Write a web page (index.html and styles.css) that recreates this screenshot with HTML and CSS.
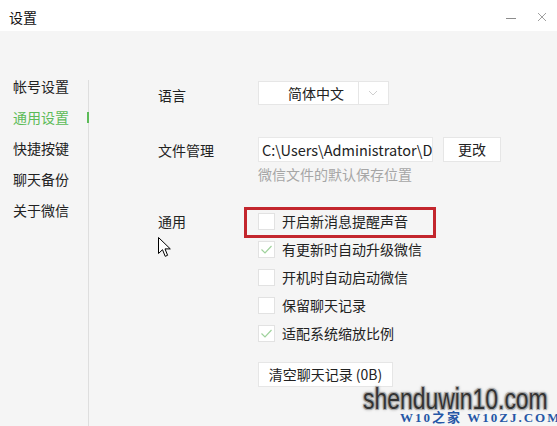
FILE: index.html
```html
<!DOCTYPE html>
<html lang="zh-CN">
<head>
<meta charset="utf-8">
<title>设置</title>
<link rel="stylesheet" href="styles.css">
</head>
<body>
<div class="window">
  <header class="titlebar">
    <span class="title">设置</span>
    <div class="controls">
      <svg class="ctl ctl-min" width="10" height="10" viewBox="0 0 10 10"><line x1="0" y1="6.5" x2="10" y2="6.5" stroke="#8c8c8c" stroke-width="1"/></svg>
      <svg class="ctl ctl-close" width="10" height="10" viewBox="0 0 10 10"><path d="M1 1L9 9M9 1L1 9" stroke="#a0a0a0" stroke-width="1" fill="none"/></svg>
    </div>
  </header>
  <div class="body">
    <nav class="sidebar">
      <ul class="nav">
        <li class="nav-item">帐号设置</li>
        <li class="nav-item active">通用设置</li>
        <li class="nav-item">快捷按键</li>
        <li class="nav-item">聊天备份</li>
        <li class="nav-item">关于微信</li>
      </ul>
      <div class="divider"></div>
    </nav>
    <main class="content">
      <section class="row row-lang">
        <div class="label label-lang">语言</div>
        <div class="select">
          <span class="select-value">简体中文</span>
          <span class="select-arrow"><svg width="10" height="6" viewBox="0 0 10 6"><path d="M1 1L5 5L9 1" stroke="#cfcfcf" stroke-width="1" fill="none"/></svg></span>
        </div>
      </section>
      <section class="row row-file">
        <div class="label label-file">文件管理</div>
        <div class="field-col">
          <div class="field-line">
            <div class="path-input">C:\Users\Administrator\D</div>
            <button class="btn btn-change">更改</button>
          </div>
          <div class="hint">微信文件的默认保存位置</div>
        </div>
      </section>
      <section class="row row-general">
        <div class="label label-general">通用</div>
        <div class="field-col">
          <ul class="checks">
            <li class="check-row"><span class="box"></span>开启新消息提醒声音<span class="mark-box"></span></li>
            <li class="check-row"><span class="box"><svg width="15" height="15" viewBox="0 0 15 15"><path d="M2.5 7.5L6 11L12.5 4" stroke="#9fd29c" stroke-width="1.2" fill="none"/></svg></span>有更新时自动升级微信</li>
            <li class="check-row"><span class="box"></span>开机时自动启动微信</li>
            <li class="check-row"><span class="box"></span>保留聊天记录</li>
            <li class="check-row"><span class="box"><svg width="15" height="15" viewBox="0 0 15 15"><path d="M2.5 7.5L6 11L12.5 4" stroke="#9fd29c" stroke-width="1.2" fill="none"/></svg></span>适配系统缩放比例</li>
          </ul>
          <button class="btn btn-clear">清空聊天记录 (0B)</button>
        </div>
      </section>
    </main>
  </div>
  <svg class="cursor" width="13" height="21" viewBox="0 0 13 21"><path d="M0.5 0.5V16.5L4.5 12.7L7.2 19.3L9.6 18.3L7 11.9H12.3Z" fill="#fff" stroke="#000" stroke-width="1" stroke-linejoin="miter"/></svg>
  <div class="watermark">
    <div class="wm-main">shenduwin10.com</div>
    <div class="wm-sub">W10之家 W10ZJ.COM</div>
  </div>
</div>
</body>
</html>
```

FILE: styles.css
```css
* { box-sizing: border-box; }
html, body { margin: 0; padding: 0; }
body {
  font-family: "Noto Sans CJK SC", "Noto Sans", sans-serif;
  font-size: 14px;
  color: #222;
  background: #f5f5f5;
}
.window {
  position: relative;
  width: 557px;
  height: 426px;
  overflow: hidden;
  background: #f5f5f5;
}
.titlebar {
  height: 31px;
  background: #fff;
  display: flex;
  align-items: center;
  justify-content: space-between;
  padding-left: 9px;
}
.title {
  font-size: 14px;
  line-height: 20px;
  color: #111;
  margin-top: 2px;
}
.controls {
  display: flex;
  align-items: flex-start;
  height: 31px;
  padding-top: 12px;
  padding-right: 10px;
  gap: 21px;
}
.ctl { display: block; }
.body {
  display: flex;
  height: 395px;
}
.sidebar {
  display: flex;
  width: 89px;
  flex: none;
}
.nav {
  list-style: none;
  margin: 0;
  padding: 40px 0 0 0;
  width: 88px;
}
.nav-item {
  position: relative;
  height: 31px;
  line-height: 31px;
  padding-left: 13px;
  font-size: 14px;
  color: #222;
}
.nav-item.active { color: #5cbb58; }
.nav-item.active::after {
  content: "";
  position: absolute;
  right: -1px;
  top: 10px;
  width: 2px;
  height: 11px;
  background: #5cbb58;
}
.divider {
  width: 1px;
  margin-top: 49px;
  background: #dedede;
}
.content {
  flex: 1;
  padding: 50px 0 0 69px;
}
.row {
  display: flex;
  align-items: flex-start;
}
.label {
  width: 100px;
  flex: none;
  line-height: 20px;
}
.label-lang { padding-top: 4px; }
.select {
  display: flex;
  width: 131px;
  height: 24px;
  background: #fff;
  border: 1px solid #e6e6e6;
}
.select-value {
  width: 100px;
  line-height: 22px;
  text-align: center;
  padding-left: 15px;
  border-right: 1px solid #e6e6e6;
}
.select-arrow {
  flex: 1;
  display: flex;
  align-items: center;
  justify-content: center;
  padding-right: 1px;
}
.select-arrow svg { display: block; }
.row-file { margin-top: 32px; }
.label-file { padding-top: 3px; }
.field-col {
  display: flex;
  flex-direction: column;
  align-items: flex-start;
}
.field-line {
  display: flex;
  gap: 10px;
}
.path-input {
  width: 175px;
  height: 25px;
  line-height: 23px;
  background: #fff;
  border: 1px solid #e8e8e8;
  padding-left: 3px;
  white-space: nowrap;
  overflow: hidden;
  font-size: 14.5px;
  color: #222;
}
.btn {
  font-family: inherit;
  font-size: 14px;
  color: #222;
  background: #fff;
  border: 1px solid #e6e6e6;
  height: 25px;
  padding: 0;
  line-height: 23px;
  margin: 0;
}
.btn-change { width: 58px; }
.hint {
  margin-top: 2px;
  line-height: 20px;
  color: #a6a6a6;
}
.row-general { margin-top: 23px; }
.label-general { padding-top: 4px; }
.checks {
  list-style: none;
  margin: 0;
  padding: 0;
}
.check-row {
  position: relative;
  display: flex;
  align-items: center;
  gap: 7px;
  height: 28px;
  line-height: 20px;
}
.box {
  width: 17px;
  height: 17px;
  flex: none;
  background: #fff;
  border: 1px solid #e2e2e2;
  display: flex;
  align-items: center;
  justify-content: center;
}
.box svg { display: block; }
.mark-box {
  position: absolute;
  left: -14px;
  top: 0;
  width: 192px;
  height: 31px;
  border: 3px solid #c3262d;
}
.btn-clear {
  width: 135px;
  margin-top: 15px;
}
.cursor {
  position: absolute;
  left: 158px;
  top: 237px;
}
.watermark {
  position: absolute;
  left: 363px;
  top: 385px;
  width: 194px;
}
.wm-main {
  font-family: "Liberation Sans", Arial, sans-serif;
  font-size: 29px;
  line-height: 28px;
  height: 28px;
  color: #333;
  white-space: nowrap;
  transform: scaleX(0.79);
  transform-origin: left center;
  text-shadow: 1px 1px 0 #aaa, -1px -1px 0 #aaa, 1px -1px 0 #aaa, -1px 1px 0 #aaa, 0 0 4px #999, 0 0 3px #999;
}
.wm-sub {
  margin-left: 37px;
  font-family: "Liberation Serif", "Noto Sans CJK SC", serif;
  font-weight: bold;
  font-size: 13px;
  line-height: 9px;
  height: 9px;
  letter-spacing: 2px;
  color: #2657a6;
  white-space: nowrap;
}
```
